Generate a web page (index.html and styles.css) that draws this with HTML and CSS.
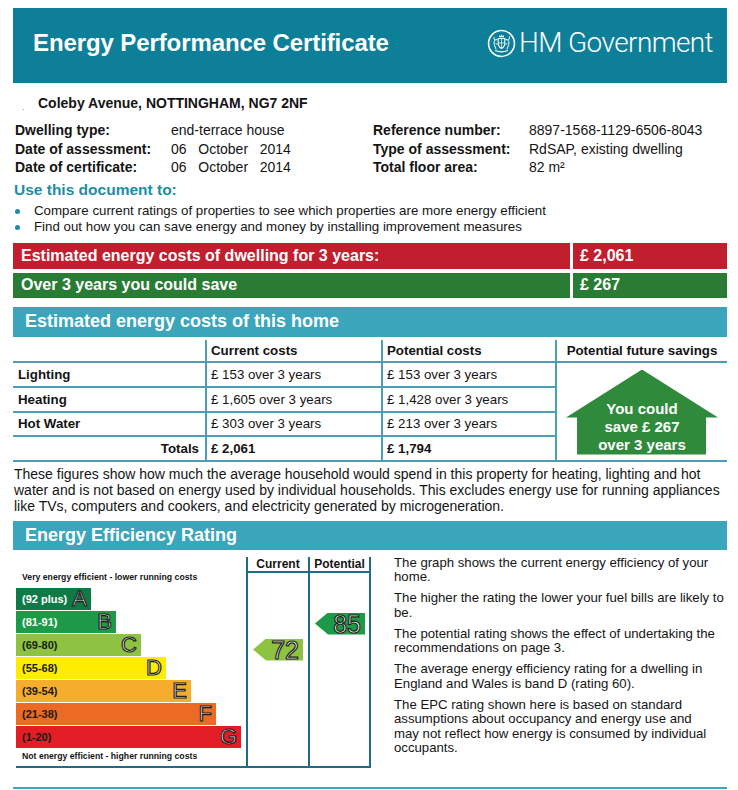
FILE: index.html
```html
<!DOCTYPE html>
<html lang="en">
<head>
<meta charset="utf-8">
<title>Energy Performance Certificate</title>
<link rel="stylesheet" href="styles.css">
</head>
<body>
<div class="page">
  <header class="banner">
    <h1 class="banner-title">Energy Performance Certificate</h1>
    <div class="hmg">
      <svg class="crest" viewBox="0 0 30 30" aria-hidden="true">
        <circle cx="15" cy="15" r="13.4" fill="none" stroke="#fff" stroke-width="1.6"/>
        <path d="M12.3 8.6 L12.9 6.2 L14 7.4 L15 5.6 L16 7.4 L17.1 6.2 L17.7 8.6 Z" fill="#fff"/>
        <path d="M11.6 9.8 H18.4 V14.6 Q18.4 18.6 15 20.2 Q11.6 18.6 11.6 14.6 Z" fill="none" stroke="#fff" stroke-width="1.1"/>
        <path d="M15 9.8 V20 M11.6 14.4 H18.4" stroke="#fff" stroke-width="0.7"/>
        <path d="M11 11 Q8 10.2 7.4 13 Q7 16 8.4 18.4 L9.4 21 M8 11.6 Q6.6 10.2 7.6 8.4 M9 15 L11 16" fill="none" stroke="#fff" stroke-width="1"/>
        <path d="M19 11 Q22 10.2 22.6 13 Q23 16 21.6 18.4 L20.6 21 M22 11.6 Q23.6 10.4 23.2 7.6 M21 15 L19 16" fill="none" stroke="#fff" stroke-width="1"/>
        <path d="M8.4 22.2 Q15 25 21.6 22.2" fill="none" stroke="#fff" stroke-width="1.3"/>
      </svg>
      <span class="hmg-text">HM Government</span>
    </div>
  </header>

  <div class="address"><span class="addr-dot">.</span>Coleby Avenue, NOTTINGHAM, NG7 2NF</div>

  <dl class="details">
    <dt>Dwelling type:</dt><dd>end-terrace house</dd>
    <dt>Reference number:</dt><dd>8897-1568-1129-6506-8043</dd>
    <dt>Date of assessment:</dt><dd>06   October   2014</dd>
    <dt>Type of assessment:</dt><dd>RdSAP, existing dwelling</dd>
    <dt>Date of certificate:</dt><dd>06   October   2014</dd>
    <dt>Total floor area:</dt><dd>82 m²</dd>
  </dl>

  <h2 class="use-title">Use this document to:</h2>
  <ul class="use-list">
    <li>Compare current ratings of properties to see which properties are more energy efficient</li>
    <li>Find out how you can save energy and money by installing improvement measures</li>
  </ul>

  <div class="cost-bar cost-red">
    <span class="cost-label">Estimated energy costs of dwelling for 3 years:</span>
    <span class="cost-value">£ 2,061</span>
  </div>
  <div class="cost-bar cost-green">
    <span class="cost-label">Over 3 years you could save</span>
    <span class="cost-value">£ 267</span>
  </div>

  <h2 class="band">Estimated energy costs of this home</h2>

  <div class="cost-grid">
    <div class="cell"></div>
    <div class="cell cell-head">Current costs</div>
    <div class="cell cell-head">Potential costs</div>
    <div class="cell cell-head cell-center">Potential future savings</div>

    <div class="cell cell-label">Lighting</div>
    <div class="cell">£ 153 over 3 years</div>
    <div class="cell">£ 153 over 3 years</div>
    <div class="cell cell-savings">
      <div class="save-arrow">You could<br>save £ 267<br>over 3 years</div>
    </div>

    <div class="cell cell-label">Heating</div>
    <div class="cell">£ 1,605 over 3 years</div>
    <div class="cell">£ 1,428 over 3 years</div>

    <div class="cell cell-label">Hot Water</div>
    <div class="cell">£ 303 over 3 years</div>
    <div class="cell">£ 213 over 3 years</div>

    <div class="cell cell-label cell-total">Totals</div>
    <div class="cell cell-head">£ 2,061</div>
    <div class="cell cell-head">£ 1,794</div>
  </div>

  <p class="notes">These figures show how much the average household would spend in this property for heating, lighting and hot water and is not based on energy used by individual households. This excludes energy use for running appliances like TVs, computers and cookers, and electricity generated by microgeneration.</p>

  <h2 class="band band-rating">Energy Efficiency Rating</h2>

  <div class="rating">
    <div class="chart">
      <div class="scale">
        <div class="scale-note">Very energy efficient - lower running costs</div>
        <div class="bars">
          <div class="bar bar-a"><span class="bar-range">(92 plus)</span><span class="bar-letter">A</span></div>
          <div class="bar bar-b"><span class="bar-range">(81-91)</span><span class="bar-letter">B</span></div>
          <div class="bar bar-c"><span class="bar-range">(69-80)</span><span class="bar-letter">C</span></div>
          <div class="bar bar-d"><span class="bar-range">(55-68)</span><span class="bar-letter">D</span></div>
          <div class="bar bar-e"><span class="bar-range">(39-54)</span><span class="bar-letter">E</span></div>
          <div class="bar bar-f"><span class="bar-range">(21-38)</span><span class="bar-letter">F</span></div>
          <div class="bar bar-g"><span class="bar-range">(1-20)</span><span class="bar-letter">G</span></div>
        </div>
        <div class="scale-note scale-note-low">Not energy efficient - higher running costs</div>
      </div>
      <div class="col col-current">
        <div class="col-head">Current</div>
        <div class="col-body">
          <div class="marker marker-c" style="margin-top:66px">72</div>
        </div>
      </div>
      <div class="col col-potential">
        <div class="col-head">Potential</div>
        <div class="col-body">
          <div class="marker marker-b" style="margin-top:40px">85</div>
        </div>
      </div>
    </div>

    <div class="rating-text">
      <p>The graph shows the current energy efficiency of your<br>home.</p>
      <p>The higher the rating the lower your fuel bills are likely to<br>be.</p>
      <p>The potential rating shows the effect of undertaking the<br>recommendations on page 3.</p>
      <p>The average energy efficiency rating for a dwelling in<br>England and Wales is band D (rating 60).</p>
      <p>The EPC rating shown here is based on standard<br>assumptions about occupancy and energy use and<br>may not reflect how energy is consumed by individual<br>occupants.</p>
    </div>
  </div>

  <div class="footer-rule"></div>
</div>
</body>
</html>
```

FILE: styles.css
```css
* {
  box-sizing: border-box;
}

html, body {
  margin: 0;
  background: #ffffff;
}

body {
  font-family: "Liberation Sans", Arial, sans-serif;
  color: #141414;
}

.page {
  width: 738px;
  height: 790px;
  overflow: hidden;
  padding: 8px 11px 0 13px;
}

/* ---------- banner ---------- */
.banner {
  height: 75px;
  background: #0e7f98;
  display: flex;
  align-items: center;
  justify-content: space-between;
  padding: 0 14px 5px 20px;
}

.banner-title {
  margin: 0;
  color: #ffffff;
  font-size: 24px;
  font-weight: bold;
  letter-spacing: -0.1px;
}

.hmg {
  display: flex;
  align-items: center;
  gap: 3px;
  color: #ffffff;
}

.crest {
  width: 29px;
  height: 29px;
  display: block;
}

.hmg-text {
  font-family: Roboto, "Liberation Sans", sans-serif;
  font-weight: 300;
  font-size: 28px;
  letter-spacing: -0.6px;
  line-height: 30px;
}

/* ---------- address & details ---------- */
.address {
  margin: 12px 0 0 9px;
  font-size: 14px;
  font-weight: bold;
  line-height: 16px;
  display: flex;
}

.addr-dot {
  width: 16px;
  font-size: 9px;
  font-weight: normal;
  color: #8a8a8a;
  padding-top: 4px;
}

.details {
  display: grid;
  grid-template-columns: 156px 202px 156px 1fr;
  margin: 6px 0 0 2px;
  font-size: 14px;
  line-height: 18.5px;
}

.details dt {
  margin: 0;
  font-weight: bold;
}

.details dd {
  margin: 0;
  white-space: pre;
}

.use-title {
  margin: 4px 0 0 1px;
  color: #1c8ea3;
  font-size: 15.5px;
  font-weight: bold;
  line-height: 18px;
}

.use-list {
  list-style: none;
  margin: 4px 0 0;
  padding: 0;
  font-size: 13.3px;
  line-height: 16px;
}

.use-list li {
  display: flex;
  align-items: flex-start;
}

.use-list li::before {
  content: "";
  flex: none;
  width: 5px;
  height: 5px;
  border-radius: 50%;
  background: #1c8ea3;
  margin: 6px 14px 0 2px;
}

/* ---------- cost bars ---------- */
.cost-bar {
  display: grid;
  grid-template-columns: 557px 1fr;
  column-gap: 3px;
  height: 26px;
  margin-top: 8px;
  color: #ffffff;
  font-size: 16px;
  font-weight: bold;
}

.cost-bar + .cost-bar {
  margin-top: 4px;
  height: 25px;
}

.cost-label,
.cost-value {
  display: flex;
  align-items: center;
}

.cost-label {
  padding-left: 8px;
}

.cost-value {
  padding-left: 7px;
}

.cost-red .cost-label,
.cost-red .cost-value {
  background: #c11f2e;
}

.cost-green .cost-label,
.cost-green .cost-value {
  background: #2a7b33;
}

/* ---------- section bands ---------- */
.band {
  margin: 9px 0 0;
  height: 30px;
  background: #3ba6bb;
  color: #ffffff;
  font-size: 18px;
  font-weight: bold;
  display: flex;
  align-items: center;
  padding-left: 12px;
}

.band-rating {
  margin-top: 7px;
  height: 29px;
}

/* ---------- cost table ---------- */
.cost-grid {
  margin-top: 3px;
  display: grid;
  grid-template-columns: 192px 174px 172px 170px;
  grid-template-rows: 21px 23px 23px 22px 23px;
  gap: 2px;
  background: #4a9fb5;
  border-bottom: 2px solid #4a9fb5;
  font-size: 13.3px;
}

.cell {
  background: #ffffff;
  display: flex;
  align-items: center;
  padding-left: 4px;
}

.cell-head {
  font-weight: bold;
}

.cell-center {
  justify-content: center;
  padding-left: 0;
}

.cell-label {
  font-weight: bold;
  padding-left: 5px;
}

.cell-total {
  justify-content: flex-end;
  padding-right: 6px;
}

.cell-savings {
  grid-column: 4;
  grid-row: 2 / span 4;
  padding: 0;
  align-items: flex-start;
  justify-content: center;
}

.save-arrow {
  margin-top: 7px;
  width: 152px;
  height: 85px;
  background: #2f8a3b;
  clip-path: polygon(50% 0, 100% 48px, 140px 48px, 140px 100%, 11px 100%, 11px 48px, 0 48px);
  color: #ffffff;
  font-size: 15px;
  font-weight: bold;
  line-height: 18px;
  text-align: center;
  padding-top: 30px;
}

.notes {
  margin: 4px 0 0 1px;
  font-size: 14px;
  line-height: 16px;
}

/* ---------- rating ---------- */
.rating {
  display: flex;
  align-items: flex-start;
  margin-top: 7px;
}

.chart {
  display: flex;
  height: 211px;
  margin-left: 3px;
  border-bottom: 2px solid #1f6b87;
}

.scale {
  width: 230px;
  padding-top: 14px;
}

.scale-note {
  font-size: 8.7px;
  font-weight: bold;
  line-height: 12px;
  padding-left: 6px;
  white-space: nowrap;
}

.scale-note-low {
  margin-top: 2px;
}

.bars {
  margin-top: 5px;
}

.bar {
  height: 22px;
  margin-bottom: 1px;
  display: flex;
  align-items: center;
  justify-content: space-between;
  padding: 0 4px 0 6px;
  color: #1a1a1a;
}

.bar:last-child {
  margin-bottom: 0;
}

.bar-range {
  font-size: 11px;
  font-weight: bold;
}

.bar-letter {
  font-size: 22px;
  line-height: 22px;
  color: #ffffff;
  -webkit-text-stroke: 1.2px #1e1e1e;
}

.bar-a { width: 75px;  background: #0f7a45; color: #ffffff; }
.bar-b { width: 100px; background: #1d9a48; color: #ffffff; }
.bar-c { width: 125px; background: #8dc341; }
.bar-d { width: 150px; background: #ffec00; }
.bar-e { width: 175px; background: #f6ad2c; }
.bar-f { width: 200px; background: #ec6b24; }
.bar-g { width: 225px; background: #e21d26; }

.col {
  width: 62px;
  border-left: 2px solid #1f6b87;
  display: flex;
  flex-direction: column;
}

.col-potential {
  width: 63px;
  border-right: 2px solid #1f6b87;
}

.col-head {
  height: 16px;
  border-bottom: 2px solid #1f6b87;
  font-size: 12px;
  font-weight: bold;
  line-height: 14px;
  text-align: center;
}

.col-body {
  flex: 1;
  padding-left: 5px;
}

.marker {
  width: 50px;
  height: 22px;
  clip-path: polygon(0 50%, 13px 0, 100% 0, 100% 100%, 13px 100%);
  font-size: 25px;
  line-height: 22px;
  text-align: right;
  padding-right: 4px;
  color: #ffffff;
  -webkit-text-stroke: 1.2px #1e1e1e;
}

.marker-b { background: #1d9a48; }
.marker-c { background: #8dc341; }

.rating-text {
  margin: -1px 0 0 23px;
  font-size: 13.2px;
  line-height: 14.5px;
  white-space: nowrap;
}

.rating-text p {
  margin: 0 0 6.5px;
}

.footer-rule {
  margin-top: 19px;
  height: 2px;
  background: #3ba6bb;
}
```
